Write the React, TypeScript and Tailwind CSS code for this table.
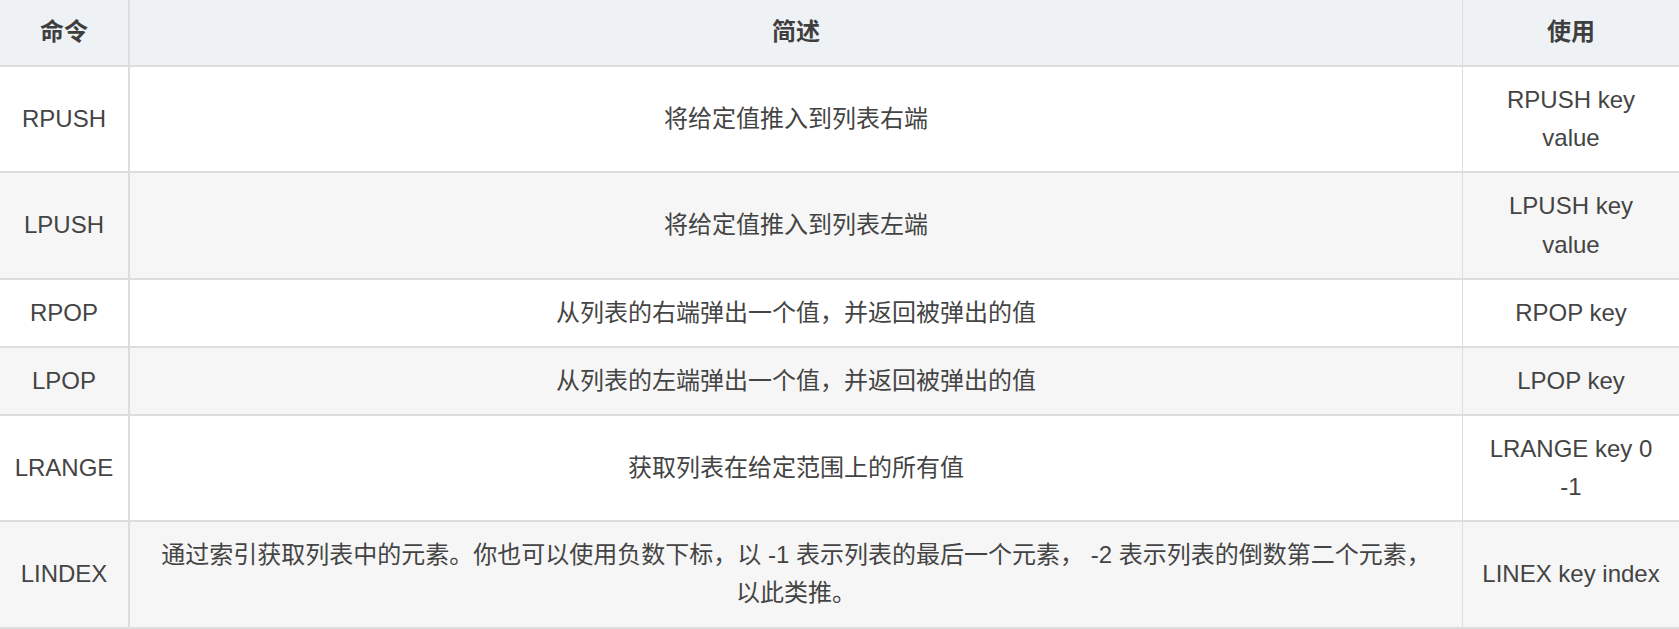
import React from "react";

type Row = { cmd: string; desc: string[]; use: string };

const rows: Row[] = [
  { cmd: "RPUSH", desc: ["将给定值推入到列表右端"], use: "RPUSH key value" },
  { cmd: "LPUSH", desc: ["将给定值推入到列表左端"], use: "LPUSH key value" },
  { cmd: "RPOP", desc: ["从列表的右端弹出一个值，并返回被弹出的值"], use: "RPOP key" },
  { cmd: "LPOP", desc: ["从列表的左端弹出一个值，并返回被弹出的值"], use: "LPOP key" },
  { cmd: "LRANGE", desc: ["获取列表在给定范围上的所有值"], use: "LRANGE key 0 -1" },
  {
    cmd: "LINDEX",
    desc: [
      "通过索引获取列表中的元素。你也可以使用负数下标，以 -1 表示列表的最后一个元素， -2 表示列表的倒数第二个元素，",
      "以此类推。",
    ],
    use: "LINEX key index",
  },
];

export default function App() {
  return (
    <div
      className="w-[1679px] h-[629px] overflow-hidden bg-white text-[24px] text-[#444444]"
      style={{ fontFamily: '"Liberation Sans", Arial, "Noto Sans CJK SC", sans-serif' }}
    >
      <div className="flex bg-[#eff2f5] border-b-2 border-[#dddddd] font-bold text-[#3f3f3f]">
        <div className="w-[130px] shrink-0 border-r-2 border-[#dddddd] h-[65px] flex items-center justify-center leading-[38.4px]">
          命令
        </div>
        <div className="flex-1 border-r border-[#dddddd] h-[65px] flex items-center justify-center leading-[38.4px]">
          简述
        </div>
        <div className="w-[216px] shrink-0 h-[65px] flex items-center justify-center leading-[38.4px]">
          使用
        </div>
      </div>
      {rows.map((r, i) => (
        <div
          key={r.cmd}
          className={
            "flex border-b-2 border-[#dddddd] " + (i % 2 === 1 ? "bg-[#f6f6f6]" : "bg-white")
          }
        >
          <div className="w-[130px] shrink-0 border-r-2 border-[#dddddd] px-3 py-[13.8px] leading-[38.4px] flex items-center justify-center text-center">
            {r.cmd}
          </div>
          <div className="flex-1 border-r border-[#dddddd] px-[18px] py-[13.8px] leading-[38.4px] flex flex-col items-center justify-center text-center">
            {r.desc.map((line) => (
              <span key={line} className="whitespace-nowrap">
                {line}
              </span>
            ))}
          </div>
          <div className="w-[216px] shrink-0 px-4 py-[13.8px] leading-[38.4px] flex items-center justify-center text-center">
            <span>{r.use}</span>
          </div>
        </div>
      ))}
    </div>
  );
}
